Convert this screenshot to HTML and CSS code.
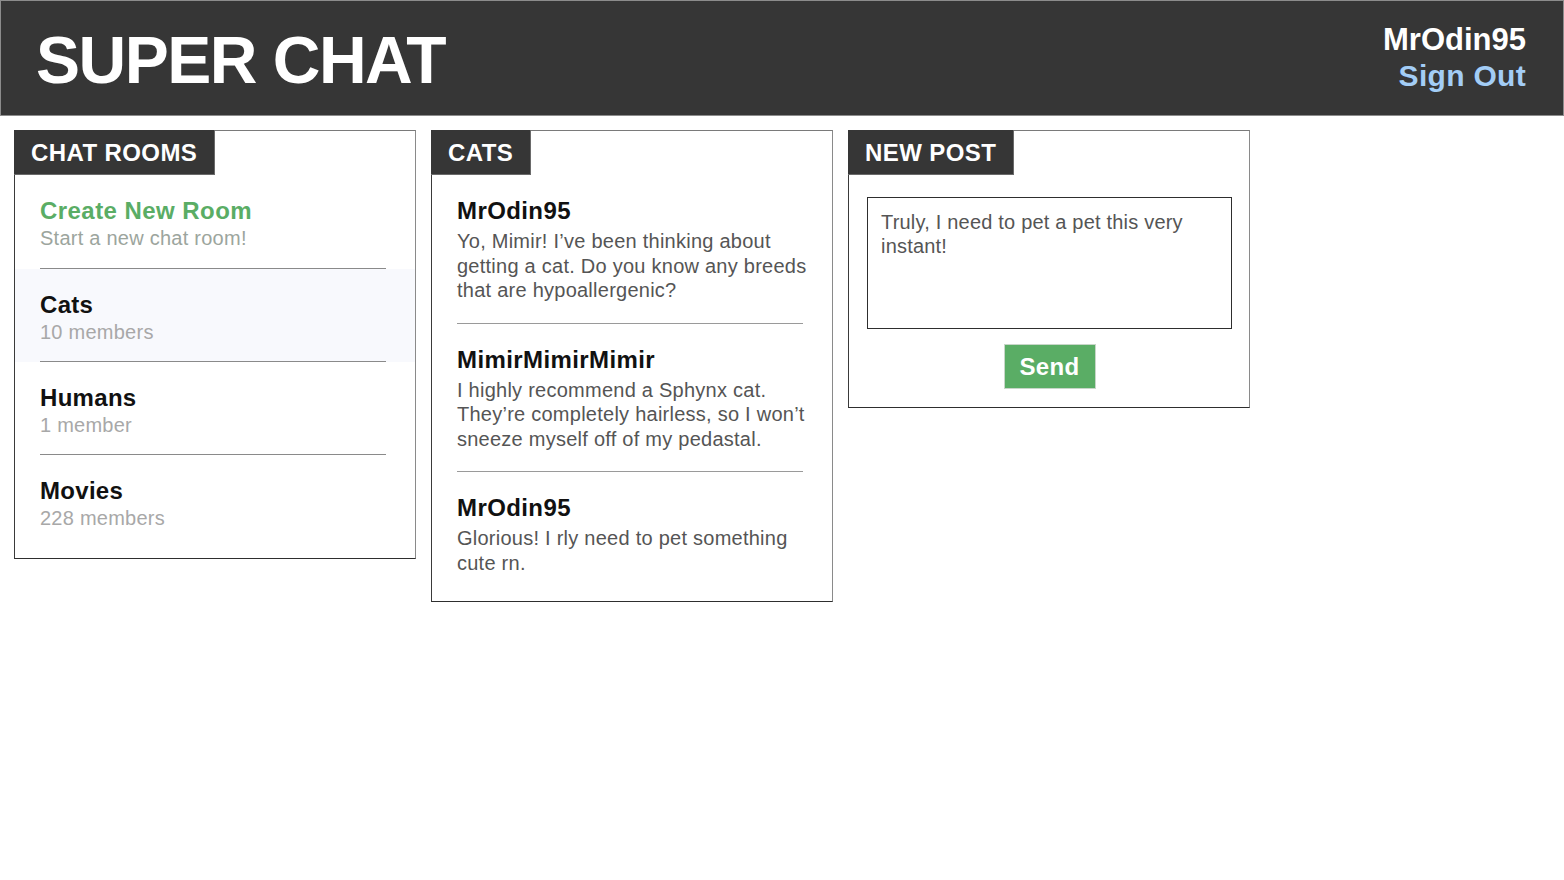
FILE: index.html
```html
<!DOCTYPE html>
<html lang="en">
<head>
<meta charset="utf-8">
<title>Super Chat</title>
<link rel="stylesheet" href="styles.css">
</head>
<body>
<header class="topbar">
  <h1 class="brand">SUPER CHAT</h1>
  <div class="account">
    <div class="account-name">MrOdin95</div>
    <a class="account-signout" href="#">Sign Out</a>
  </div>
</header>
<main class="board">
  <section class="panel panel-rooms">
    <h2 class="panel-tab">CHAT ROOMS</h2>
    <ul class="rooms">
      <li class="room room-new">
        <div class="room-title">Create New Room</div>
        <div class="room-sub">Start a new chat room!</div>
      </li>
      <li class="room room-active">
        <div class="room-title">Cats</div>
        <div class="room-sub">10 members</div>
      </li>
      <li class="room">
        <div class="room-title">Humans</div>
        <div class="room-sub">1 member</div>
      </li>
      <li class="room">
        <div class="room-title">Movies</div>
        <div class="room-sub">228 members</div>
      </li>
    </ul>
  </section>
  <section class="panel panel-messages">
    <h2 class="panel-tab">CATS</h2>
    <ul class="messages">
      <li class="message">
        <div class="message-author">MrOdin95</div>
        <p class="message-body">Yo, Mimir! I’ve been thinking about getting a cat. Do you know any breeds that are hypoallergenic?</p>
      </li>
      <li class="message">
        <div class="message-author">MimirMimirMimir</div>
        <p class="message-body">I highly recommend a Sphynx cat. They’re completely hairless, so I won’t sneeze myself off of my pedastal.</p>
      </li>
      <li class="message">
        <div class="message-author">MrOdin95</div>
        <p class="message-body">Glorious! I rly need to pet something cute rn.</p>
      </li>
    </ul>
  </section>
  <section class="panel panel-post">
    <h2 class="panel-tab">NEW POST</h2>
    <div class="post-form">
      <div class="post-input">Truly, I need to pet a pet this very instant!</div>
      <button class="send-btn" type="button">Send</button>
    </div>
  </section>
</main>
</body>
</html>
```
FILE: styles.css
```css
* { box-sizing: border-box; }

html, body {
  margin: 0;
  padding: 0;
  background: #ffffff;
  font-family: "Liberation Sans", Arial, Helvetica, sans-serif;
}

.topbar {
  height: 116px;
  background: #363636;
  border: 1px solid #8c8c8c;
  display: flex;
  align-items: center;
  justify-content: space-between;
  padding: 0 37px 0 35px;
}

.brand {
  margin: 3px 0 0 0;
  font-size: 66px;
  line-height: 66px;
  font-weight: 700;
  letter-spacing: -1.5px;
  color: #ffffff;
}

.account {
  text-align: right;
  font-weight: 700;
}

.account-name {
  font-size: 31px;
  line-height: 36px;
  color: #ffffff;
}

.account-signout {
  display: block;
  font-size: 30px;
  line-height: 36px;
  letter-spacing: 0.3px;
  color: #a3cdf6;
  text-decoration: none;
}

.board {
  display: flex;
  align-items: flex-start;
  gap: 15px;
  padding: 14px 14px;
}

.panel {
  width: 402px;
  border: 1px solid;
  border-color: #7a7a7a #8a8a8a #2e2e2e #3a3a3a;
}

.panel-rooms {
  padding-bottom: 10px;
}

.panel-messages {
  padding-bottom: 8px;
}

.panel-tab {
  display: inline-block;
  margin: -1px 0 0 -1px;
  height: 45px;
  padding: 1px 17px 0 17px;
  background: #363636;
  border-right: 1px solid #6a6a6a;
  border-bottom: 1px solid #6a6a6a;
  color: #ffffff;
  font-size: 24px;
  line-height: 44px;
  font-weight: 700;
  letter-spacing: 0.4px;
  vertical-align: top;
}

.rooms, .messages {
  list-style: none;
  margin: 0;
  padding: 0;
}

.room {
  padding: 0 29px 0 25px;
}

.room-active {
  background: #f8f9fd;
}

.room > .room-title {
  padding-top: 21px;
  font-size: 24px;
  line-height: 30px;
  font-weight: 700;
  letter-spacing: 0.3px;
  color: #111111;
}

.room > .room-sub {
  font-size: 20px;
  line-height: 24px;
  letter-spacing: 0.25px;
  color: #a8a8a8;
  padding-bottom: 17px;
  border-bottom: 1px solid #8a8a8a;
}

.room:last-child > .room-sub {
  border-bottom: 0;
  padding-bottom: 18px;
}

.room-new > .room-title {
  color: #5aad65;
  letter-spacing: 0.45px;
}

.room-new > .room-sub {
  color: #9ca59d;
  padding-bottom: 18px;
}

.message {
  padding: 0 29px 0 25px;
}

.message::after {
  content: "";
  display: block;
  border-bottom: 1px solid #9a9a9a;
}

.message:last-child::after {
  border-bottom: 0;
}

.message-author {
  padding-top: 21px;
  font-size: 24px;
  line-height: 30px;
  font-weight: 700;
  letter-spacing: 0.4px;
  color: #111111;
}

.message-body {
  margin: 3px -14px 0 0;
  padding-bottom: 20px;
  font-size: 20px;
  line-height: 24.5px;
  letter-spacing: 0.25px;
  color: #555555;
}

.message:last-child .message-body {
  padding-bottom: 18px;
}

.post-form {
  display: flex;
  flex-direction: column;
  align-items: center;
  padding: 22px 17px 18px 18px;
}

.post-input {
  align-self: stretch;
  height: 132px;
  border: 1px solid #2e2e2e;
  padding: 12px 13px;
  font-size: 20px;
  line-height: 24px;
  letter-spacing: 0.2px;
  color: #555555;
}

.send-btn {
  margin-top: 15px;
  width: 92px;
  height: 45px;
  background: #5aad65;
  border: 1px solid #c8d6c9;
  color: #ffffff;
  font-family: "Liberation Sans", Arial, Helvetica, sans-serif;
  font-size: 24px;
  font-weight: 700;
  letter-spacing: 0.3px;
  padding: 0;
}
```
